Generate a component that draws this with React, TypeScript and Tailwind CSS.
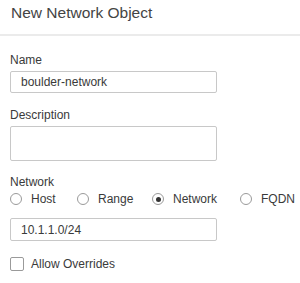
import React from 'react';

const Radio = ({ label, checked }: { label: string; checked?: boolean }) => (
  <label className="flex items-center gap-[9px]">
    <span className="w-[12px] h-[12px] rounded-full border border-[#9a9a9a] bg-white flex items-center justify-center">
      {checked && <span className="w-[5px] h-[5px] rounded-full bg-[#333]" />}
    </span>
    <span>{label}</span>
  </label>
);

const App = () => (
  <div className="w-[300px] h-[283px] bg-white text-[#3a3a3a] text-[12px] font-['Liberation_Sans',Arial,sans-serif]">
    <div className="h-[34px] pl-[11px] pt-[1px] text-[15.5px] text-[#444]">New Network Object</div>
    <div className="h-[2px] bg-[#ebebeb]" />
    <div className="pl-[10px] pt-[16px]">
      <div className="leading-[16px]">Name</div>
      <div className="mt-[3px] w-[207px] h-[22px] border border-[#c8c8c8] rounded-[2px] pl-[10px] flex items-center">
        boulder-network
      </div>
      <div className="mt-[14px] leading-[16px]">Description</div>
      <div className="mt-[3px] w-[207px] h-[35px] border border-[#c8c8c8] rounded-[2px]" />
      <div className="mt-[13px] leading-[16px]">Network</div>
      <div className="mt-[1px] flex items-center h-[16px]">
        <div className="w-[67px]"><Radio label="Host" /></div>
        <div className="w-[75px]"><Radio label="Range" /></div>
        <div className="w-[88px]"><Radio label="Network" checked /></div>
        <div><Radio label="FQDN" /></div>
      </div>
      <div className="mt-[11px] w-[207px] h-[23px] border border-[#c8c8c8] rounded-[2px] pl-[10px] flex items-center">
        10.1.1.0/24
      </div>
      <label className="mt-[14px] flex items-center gap-[7px]">
        <span className="w-[14px] h-[14px] border border-[#9a9a9a] rounded-[2px]" />
        <span>Allow Overrides</span>
      </label>
    </div>
  </div>
);

export default App;
